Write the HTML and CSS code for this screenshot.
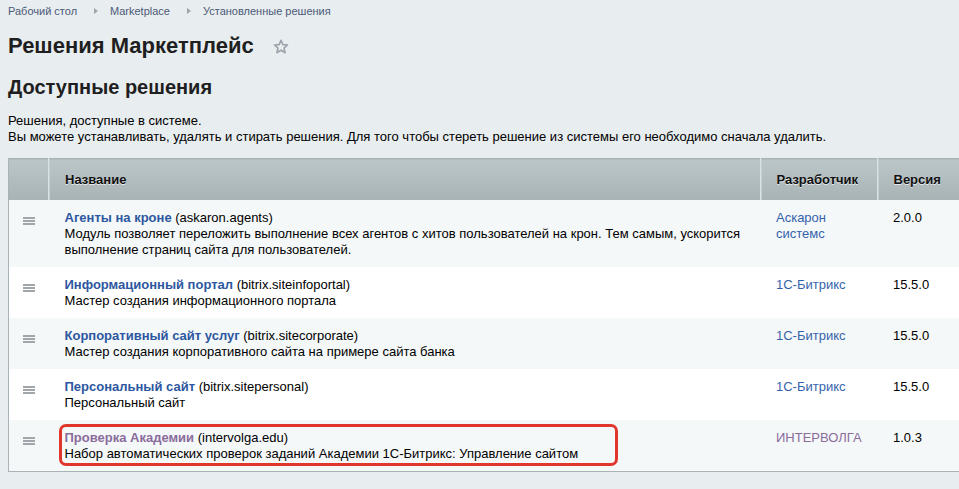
FILE: index.html
```html
<!DOCTYPE html>
<html lang="ru">
<head>
  <meta charset="UTF-8">
  <title>Решения Маркетплейс</title>
  <link rel="stylesheet" href="styles.css">
</head>
<body>
  <div class="page">
    <div class="breadcrumbs">
      <a href="#">Рабочий стол</a>
      <span class="crumb-arrow"></span>
      <a href="#">Marketplace</a>
      <span class="crumb-arrow"></span>
      <a href="#">Установленные решения</a>
    </div>

    <h1 class="page-title">Решения Маркетплейс
      <svg class="star" width="16" height="16" viewBox="0 0 16 16">
        <path d="M8 1.3l1.9 4.3 4.6.4-3.5 3.1 1.1 4.6L8 11.3l-4.1 2.4 1.1-4.6L1.5 6l4.6-.4z" fill="none" stroke="#9aa3ab" stroke-width="1.6" stroke-linejoin="round"/>
      </svg>
    </h1>

    <h2 class="section-title">Доступные решения</h2>

    <p class="intro">Решения, доступные в системе.<br>Вы можете устанавливать, удалять и стирать решения. Для того чтобы стереть решение из системы его необходимо сначала удалить.</p>

    <div class="grid-wrap">
      <table class="grid">
        <colgroup>
          <col class="col-handle">
          <col>
          <col class="col-dev">
          <col class="col-ver">
        </colgroup>
        <thead>
          <tr>
            <th></th>
            <th>Название</th>
            <th>Разработчик</th>
            <th>Версия</th>
          </tr>
        </thead>
        <tbody>
          <tr>
            <td class="handle"><span class="burger"></span></td>
            <td><a class="name" href="#">Агенты на кроне</a> (askaron.agents)<br>Модуль позволяет переложить выполнение всех агентов с хитов пользователей на крон. Тем самым, ускорится выполнение страниц сайта для пользователей.</td>
            <td><a class="dev" href="#">Аскарон системс</a></td>
            <td>2.0.0</td>
          </tr>
          <tr>
            <td class="handle"><span class="burger"></span></td>
            <td><a class="name" href="#">Информационный портал</a> (bitrix.siteinfoportal)<br>Мастер создания информационного портала</td>
            <td><a class="dev" href="#">1С-Битрикс</a></td>
            <td>15.5.0</td>
          </tr>
          <tr>
            <td class="handle"><span class="burger"></span></td>
            <td><a class="name" href="#">Корпоративный сайт услуг</a> (bitrix.sitecorporate)<br>Мастер создания корпоративного сайта на примере сайта банка</td>
            <td><a class="dev" href="#">1С-Битрикс</a></td>
            <td>15.5.0</td>
          </tr>
          <tr>
            <td class="handle"><span class="burger"></span></td>
            <td><a class="name" href="#">Персональный сайт</a> (bitrix.sitepersonal)<br>Персональный сайт</td>
            <td><a class="dev" href="#">1С-Битрикс</a></td>
            <td>15.5.0</td>
          </tr>
          <tr>
            <td class="handle"><span class="burger"></span></td>
            <td class="marked"><a class="name visited" href="#">Проверка Академии</a> (intervolga.edu)<br>Набор автоматических проверок заданий Академии 1С-Битрикс: Управление сайтом
              <span class="highlight"></span>
            </td>
            <td><a class="dev visited" href="#">ИНТЕРВОЛГА</a></td>
            <td>1.0.3</td>
          </tr>
        </tbody>
      </table>
    </div>
  </div>
</body>
</html>
```

FILE: styles.css
```css
body {
  margin: 0;
  background-color: #e8edef;
  font-family: "Liberation Sans", Arial, sans-serif;
  font-size: 13px;
  color: #000;
  overflow: hidden;
}

.page {
  padding: 4px 0 0 8px;
}

a {
  text-decoration: none;
}

.breadcrumbs {
  font-size: 11px;
  line-height: 14px;
  height: 14px;
  display: flex;
  align-items: center;
}

.breadcrumbs a {
  color: #4b5a78;
}

.crumb-arrow {
  width: 0;
  height: 0;
  border-left: 4px solid #9ea6ac;
  border-top: 3.5px solid transparent;
  border-bottom: 3.5px solid transparent;
  margin: 0 12px 0 17px;
}

.page-title {
  margin: 15px 0 0;
  font-size: 22px;
  line-height: 26px;
  font-weight: bold;
  color: #1f1f1f;
  display: flex;
  align-items: center;
}

.star {
  margin-left: 19px;
  margin-top: 1px;
}

.section-title {
  margin: 16px 0 0;
  font-size: 20px;
  line-height: 24px;
  font-weight: bold;
  color: #1f1f1f;
}

.intro {
  margin: 14px 0 0;
  line-height: 16px;
}

.grid-wrap {
  margin-top: 13px;
}

.grid {
  width: 100%;
  table-layout: fixed;
  border-collapse: collapse;
  border-top: 1px solid #a9b3b7;
  border-left: 1px solid #a9b3b7;
  border-bottom: 1px solid #a9b3b7;
}

.col-handle {
  width: 40px;
}

.col-dev {
  width: 117px;
}

.col-ver {
  width: 82px;
}

.grid th {
  height: 41px;
  padding: 0 16px;
  text-align: left;
  font-weight: bold;
  color: #111;
  text-shadow: 0 1px 0 rgba(255, 255, 255, 0.7);
  background: linear-gradient(#bcc6c9, #a8b3b6);
  border-left: 1px solid #dae1e3;
  box-shadow: inset 1px 0 0 #c6cfd2;
}

.grid th:first-child {
  border-left: none;
  box-shadow: none;
}

.grid td {
  padding: 10px 16px 9px;
  line-height: 16px;
    vertical-align: top;
}

.grid tbody tr:nth-child(odd) {
  background-color: #f5f8f9;
}

.grid tbody tr:nth-child(even) {
  background-color: #fff;
}

.grid td.handle {
  padding: 17px 0 0 14px;
}

.burger {
  display: block;
  width: 12px;
  height: 8px;
  border-top: 2px solid #a1a6aa;
  border-bottom: 2px solid #a1a6aa;
  box-sizing: border-box;
  position: relative;
}

.burger::after {
  content: "";
  position: absolute;
  left: 0;
  right: 0;
  top: 1px;
  height: 2px;
  background: #a1a6aa;
}

.name {
  font-weight: bold;
  color: #2c57a0;
}

.dev {
  color: #3563ab;
}

.visited {
  color: #8a6c9c;
}

.marked {
  position: relative;
}

.highlight {
  position: absolute;
  left: 10px;
  top: 4px;
  width: 553px;
  height: 36px;
  border: 3px solid #e0362c;
  border-radius: 7px;
  pointer-events: none;
}
```
